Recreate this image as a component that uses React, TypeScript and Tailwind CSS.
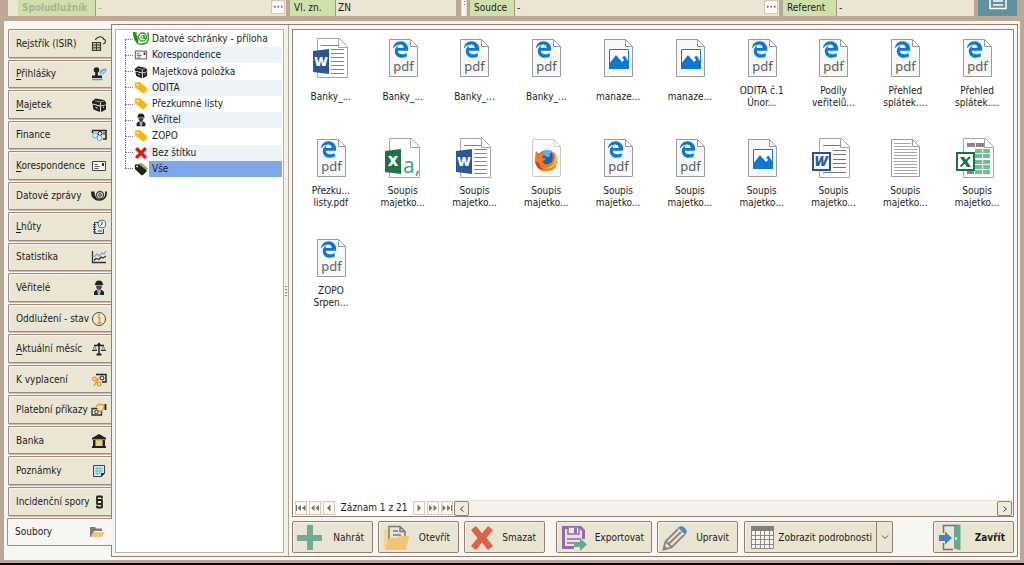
import React from "react";
import { FaEdgeLegacy } from "react-icons/fa";

type IconProps = { className?: string };

const Svg16 = ({ children, className = "h-4 w-4" }: { children: React.ReactNode; className?: string }) => (
  <svg viewBox="0 0 16 16" className={`shrink-0 ${className}`} fill="none" aria-hidden="true">
    {children}
  </svg>
);

const RegisterIcon = () => (
  <Svg16>
    <path d="M1.500 6.500h8v8h-8z" fill="#b9cb8c" stroke="#39422a" strokeWidth="1.200" />
    <path d="M1.500 9h8M1.500 11.800h8M5.500 6.500v8" stroke="#39422a" />
    <path d="M4.500 4q.5-2.500 3-2.500q1.500-1.300 3.500-.300q1.500.800 1.500 2q2 .5 2 2.300T12 8" stroke="#333" strokeWidth="1.200" />
  </Svg16>
);

const StampIcon = () => (
  <Svg16>
    <circle cx="5.500" cy="4" r="2.800" fill="#222" />
    <path d="M4.500 5h2l.5 4.500h4V12H1V9.500h3z" fill="#222" />
    <path d="M1 13.500h10.500" stroke="#4f9bc7" strokeWidth="1.500" />
    <path d="M8.500 8c-.5-3 2.500-6 7-5.500c.5 3-2.500 6.500-6 6z" fill="#6ab0de" />
    <path d="M9 8.500l5-4" stroke="#d9effa" />
  </Svg16>
);

const ChestIcon = ({ className }: IconProps) => (
  <Svg16 className={className}>
    <path d="M1 4.500L4.500 1.500L13 3l2 2.500v2L9.500 8.500L1 6.500z" fill="#222" />
    <path d="M1.500 7.500L9 9.500v5.500l-6.500-2.500zM10 9.500l5-1.500v4.500L10 15z" fill="#222" />
    <path d="M4 3.800l6 1.200l3-1" stroke="#aaa69b" strokeWidth=".9" />
    <path d="M9.500 5.500v3M4.500 10.500l2 .600M12 10.500l1-.400" stroke="#f0ece0" />
  </Svg16>
);

const FinanceIcon = () => (
  <Svg16>
    <path d="M1 3.500h14v8.500h-3M1.500 3.500V6" stroke="#222" strokeWidth="1.500" />
    <circle cx="9" cy="6.500" r="2" stroke="#222" />
    <circle cx="4" cy="8.500" r="2.500" fill="#d9edf8" stroke="#5aa8d6" />
    <circle cx="8.500" cy="11" r="2.500" fill="#d9edf8" stroke="#5aa8d6" />
    <path d="M13 5v3" stroke="#222" />
  </Svg16>
);

const LetterIcon = ({ className }: IconProps) => (
  <Svg16 className={className}>
    <path d="M1.500 3.500h13v9h-13z" stroke="#444" fill="#f7f6f0" />
    <path d="M3.500 6.500h3M3.500 8.500h5M3.500 10.500h4" stroke="#555" />
    <path d="M11 5h2v3h-2z" fill="#333" />
  </Svg16>
);

const HornIcon = () => (
  <Svg16>
    <path d="M0 3.500h3.500q0 4.500 3 7.500q-6.500 1.500-6.500-7.500z" fill="#222" />
    <path d="M16 3.500h-2q1 5-3 7.500q5 1 5-7.500z" fill="#222" />
    <circle cx="9" cy="7" r="3.500" stroke="#444" strokeWidth="1.300" />
    <circle cx="9" cy="7" r="1.400" stroke="#333" />
    <path d="M4 11q4 2 8.500 0" stroke="#222" strokeWidth="1.500" />
  </Svg16>
);

const DataBoxIcon = () => (
  <Svg16>
    <path d="M0 1h3.500l2 9l-1 3c-3-3-4.500-7-4.500-12z" fill="#23801f" />
    <path d="M2 1h2l1.500 9z" fill="#8cc63f" />
    <circle cx="9.500" cy="6" r="4" stroke="#2d9a2a" strokeWidth="1.300" />
    <circle cx="9.500" cy="6" r="1.500" stroke="#2d9a2a" />
    <path d="M11 4v3q1 1 2-.5M4 11.500q3 3 8 1t2.800-11" stroke="#2d9a2a" strokeWidth="1.500" />
  </Svg16>
);

const DeadlineIcon = () => (
  <Svg16>
    <path d="M8 3.500H3.500v11h9V10" stroke="#3b444b" fill="#dfe7ea" />
    <path d="M2 5.500h3M2 8h3M2 10.500h3M2 13h3" stroke="#3b444b" />
    <circle cx="11" cy="5" r="4" fill="#e8f3f8" stroke="#52788c" />
    <path d="M11 2.500V5l-1.500 1.500M7 12h4" stroke="#3b444b" />
  </Svg16>
);

const StatsIcon = () => (
  <Svg16>
    <path d="M1.500 2v11.500H15" stroke="#333" strokeWidth="1.300" />
    <path d="M3 8l3-3l2 2l3-3l2 1l2-3" stroke="#69add1" strokeWidth="1.300" />
    <path d="M3 11.500l2-2l3 1l2-2.500l2 1l3-2" stroke="#333" strokeWidth="1.300" />
  </Svg16>
);

const PersonIcon = ({ className }: IconProps) => (
  <Svg16 className={className}>
    <path d="M4.500 3q0-2.500 3.500-2.500t3.500 2.500l1 2h-9z" fill="#222" />
    <path d="M5 5.500h6q0 4-3 4t-3-4z" fill="#4a4a4a" />
    <path d="M3 15v-3q1-2 3.500-2.500h3Q12 10 13 12v3z" fill="#222" />
    <path d="M6 10h4L9 15H7z" fill="#86b9d7" />
  </Svg16>
);

const InfoIcon = () => (
  <Svg16>
    <circle cx="8" cy="8" r="6.500" stroke="#4e4636" fill="#f3e9c9" />
    <path d="M6.500 6.500H8.500V12M6.500 12h4" stroke="#d79a17" strokeWidth="1.500" />
    <circle cx="8" cy="4" r="1.100" fill="#d79a17" />
  </Svg16>
);

const ScalesIcon = () => (
  <Svg16>
    <path d="M8 3v10M3 4.500h3.500l1.500-2l1.500 2H13" stroke="#222" strokeWidth="1.500" />
    <path d="M3.500 5L2 9h3.500zM12.500 5l-2 4H14z" stroke="#666" strokeWidth=".8" />
    <path d="M1 9.500h5M10 9.500h5" stroke="#333" />
    <path d="M5.500 13.500h5" stroke="#222" strokeWidth="2" />
  </Svg16>
);

const PercentIcon = () => (
  <Svg16>
    <path d="M5 2.500h10v7.500h-4" stroke="#222" strokeWidth="1.400" />
    <circle cx="11" cy="6" r="2" stroke="#222" />
    <circle cx="3.500" cy="7" r="1.800" stroke="#dd9a25" strokeWidth="1.300" />
    <circle cx="8" cy="12" r="1.800" stroke="#dd9a25" strokeWidth="1.300" />
    <path d="M8.500 5L3 14" stroke="#dd9a25" strokeWidth="1.400" />
  </Svg16>
);

const PaymentIcon = () => (
  <Svg16>
    <path d="M1 6.500h9.500v6.500H1z" stroke="#333" strokeWidth="1.300" />
    <circle cx="5.500" cy="10" r="1.800" stroke="#333" />
    <path d="M5 5q2-3.500 5-2.500l3 .5v4l-3 2q-2 1-2-1" stroke="#dd9a25" fill="#f4e2b5" strokeWidth="1.400" />
    <path d="M14.500 2v6" stroke="#222" strokeWidth="1.800" />
  </Svg16>
);

const BankIcon = () => (
  <Svg16>
    <path d="M1 5l7-4l7 4v1.500H1zM1 13h14v2H1zM2 7h2.500v6H2zM11.500 7H14v6h-2.500z" fill="#222" />
    <path d="M5.500 6.500h5v6h-5z" fill="#e5b54a" />
    <path d="M6.500 9h3M6.500 11h3" stroke="#fff4d0" />
  </Svg16>
);

const NoteIcon = () => (
  <Svg16>
    <path d="M2.500 2.500h11v8l-3 3h-8z" fill="#cfe8f5" stroke="#444" />
    <path d="M4 5.500h8M4 8h8M4 10.500h5M6 4v8M9 4v7" stroke="#62aed5" strokeWidth=".8" />
    <path d="M10 14v-4h4z" fill="#333" />
  </Svg16>
);

const ParagraphIcon = () => (
  <Svg16>
    <path d="M11 4.500V3q0-.5-.5-.5h-4q-.5 0-.5.5v2.500q0 .5.500.5h4q.5 0 .5.500v3q0 .5-.5.500h-4q-.5 0-.5-.5v-3q0-.5.500-.5M10.500 10q.5 0 .5.500V13q0 .5-.5.500h-4Q6 13.500 6 13v-1.500" stroke="#222" strokeWidth="1.800" />
  </Svg16>
);

const FolderIcon = () => (
  <Svg16>
    <path d="M1 3h5l1 1.500h6V7H5l-3 6H1z" fill="#7c7c80" />
    <path d="M4.500 8H16l-3 5H1.500z" fill="#ecc67c" />
  </Svg16>
);

const TagIcon = ({ className }: IconProps) => (
  <Svg16 className={className}>
    <path d="M1 3q0-1.500 1.500-1.500H7l8 7q.7.700 0 1.500l-3.500 4q-.7.700-1.500 0L1 7z" fill="#fdb515" />
    <circle cx="4" cy="4.500" r="1" fill="#fff" />
  </Svg16>
);

const AllTagsIcon = ({ className }: IconProps) => (
  <Svg16 className={className}>
    <path d="M4 2l5-1l6.500 6l-1 4l-6 2z" fill="#8fa653" />
    <path d="M1 4q0-1.500 1.500-1.500L6 3l8 6v2l-4 4H8.500L1 8z" fill="#1f241a" />
    <circle cx="3.500" cy="5" r="1" fill="#fff" />
  </Svg16>
);

const CrossIcon = ({ className }: IconProps) => (
  <Svg16 className={className}>
    <path d="M2.500 2.500l11 11M13.500 2.500l-11 11" stroke="#f20d0d" strokeWidth="3.800" />
  </Svg16>
);

/* ---------- file icons ---------- */

const Page = ({ fill = "#f8f8f8" }: { fill?: string }) => (
  <>
    <path d="M10.500 5.500h21l7 7v30h-28z" fill={fill} stroke="#9b9b9b" />
    <path d="M31.500 5.500v7h7z" fill="#fff" stroke="#9b9b9b" />
  </>
);

const WidePage = () => (
  <>
    <path d="M10.500 4.500h22l8 8v31h-30z" fill="#fff" stroke="#a5a5a5" />
    <path d="M31.500 4.500v9h9" stroke="#a5a5a5" />
  </>
);

type FileKind = "word" | "pdf" | "image" | "csv" | "firefox" | "rtf" | "text" | "excel";

const FileIcon = ({ kind }: { kind: FileKind }) => (
  <svg viewBox="0 0 48 48" className="h-12 w-12 shrink-0" fill="none" aria-hidden="true">
    {kind === "pdf" && (
      <>
        <Page />
        <FaEdgeLegacy x="13" y="7" size={17} color="#0a78d7" />
        <text x="24.500" y="37" textAnchor="middle" fontFamily="Noto Sans, sans-serif" fontSize="13" fill="#5c5c5c">pdf</text>
      </>
    )}
    {kind === "image" && (
      <>
        <Page />
        <path d="M15.500 15.500h19v19h-19z" fill="#fff" stroke="#0a78d7" />
        <path d="M15 30l7-9l6 7l2-2l-2-3l3-1l4 7v6H15z" fill="#0a78d7" />
      </>
    )}
    {kind === "word" && (
      <>
        <WidePage />
        <path d="M14 11.500h18M24 15.500h13M24 19.500h13M24 23.500h13M24 27.500h13M24 31.500h13M24 35.500h13M24 39.500h13" stroke="#858585" />
        <path d="M6 17l16-2v25l-16-2z" fill="#2b579a" />
        <text x="14" y="32" textAnchor="middle" fontFamily="Open Sans, sans-serif" fontSize="13" fontWeight="800" fill="#fff">W</text>
      </>
    )}
    {kind === "csv" && (
      <>
        <WidePage />
        <text x="24" y="39" fontFamily="Noto Sans, sans-serif" fontSize="21" fill="#4fa077">a,</text>
        <path d="M6 17l16-2v25l-16-2z" fill="#207245" />
        <text x="14" y="32" textAnchor="middle" fontFamily="Open Sans, sans-serif" fontSize="14" fontWeight="800" fill="#fff">X</text>
      </>
    )}
    {kind === "rtf" && (
      <>
        <WidePage />
        <path d="M14 11.500h18M24 16.500h13M24 20.500h13M24 25.500h13M24 29.500h13M24 33.500h13M14 38.500h23" stroke="#777" />
        <path d="M4 19h17v17H4z" fill="#fff" stroke="#2a4f9c" strokeWidth="2" />
        <text x="12" y="32" textAnchor="middle" fontFamily="Open Sans, sans-serif" fontSize="14" fontStyle="italic" fontWeight="800" fill="#2a5bb0">W</text>
      </>
    )}
    {kind === "text" && (
      <>
        <Page fill="#fff" />
        <path d="M13 9.500h17M13 12.500h17M13 15.500h23M13 18.500h23M13 21.500h23M13 24.500h23M13 27.500h23M13 30.500h23M13 33.500h23M13 36.500h23M13 39.500h23" stroke="#a6a6a6" />
      </>
    )}
    {kind === "excel" && (
      <>
        <WidePage />
        <path d="M14 9h8v4h-8zM23 9h8v4h-8zM14 36h7v4h-7z" fill="#8c8585" />
        <path d="M22 15h7v4h-7zM30 15h7v4h-7zM22 20h7v4h-7zM30 20h7v4h-7zM22 26h7v4h-7zM30 26h7v4h-7zM22 31h7v4h-7zM30 31h7v4h-7zM22 36h7v4h-7zM30 36h7v4h-7z" fill="#6fbf92" />
        <path d="M4 19h17v17H4z" fill="#fff" stroke="#1d7044" strokeWidth="2" />
        <path d="M7 23h4l7 10h-4z" fill="#1d7044" />
        <path d="M17 23L7.500 32.500" stroke="#1d7044" strokeWidth="2" />
      </>
    )}
    {kind === "firefox" && (
      <>
        <path d="M12 5.500h20l6.500 7V41q0 1.500-1.500 1.500H12q-1.500 0-1.500-1.500V7q0-1.500 1.500-1.500z" fill="#fbfbfb" stroke="#ccc" />
        <path d="M32 5.500v7h6.500" stroke="#ccc" />
        <circle cx="25" cy="26" r="10" fill="#1d64ad" />
        <path d="M20 18q5-4 10 0q-3 1-2 4q-4 3-8-4z" fill="#58b8ea" />
        <path d="M14 17q1 2 3 2q3-1 6 1l-3 3q1 2 4 1q-1 3-4 3q2 4 6 3q5-1 5-6q0-4-2-7q6 3 6 9.500q0 10.500-10.500 10.500T13 26q0-5 1-9z" fill="#ef7b1a" />
        <path d="M33 19q4 6 0 12q-4 5-11 3q8 0 10-6q2-5 1-9z" fill="#fbc52d" />
        <path d="M13 27q1 9 10 10q-5-3-6-8z" fill="#d9411e" />
      </>
    )}
  </svg>
);

/* ---------- toolbar icons ---------- */

const Svg28 = ({ children }: { children: React.ReactNode }) => (
  <svg viewBox="0 0 28 28" className="h-7 w-7 shrink-0" fill="none" aria-hidden="true">
    {children}
  </svg>
);

const PlusIcon = () => (
  <Svg28>
    <path d="M11 1h6v10h9v6h-9v9h-6v-9H1v-6h10z" fill="#72ac94" />
  </Svg28>
);

const OpenIcon = () => (
  <Svg28>
    <path d="M2 5h5v19H2z" fill="#f6d58c" />
    <path d="M7 18V2.500h11l5 5V14M18 2.500v5h5M11 7h5M11 11h8" stroke="#777b80" strokeWidth="1.500" />
    <path d="M7 14h8l3-2h9l-3 14H3z" fill="#efc772" />
  </Svg28>
);

const DeleteIcon = () => (
  <Svg28>
    <path d="M3 6l5-4l6 7.500l6-7.500l5 4l-6.500 8l6.500 8l-5 4l-6-7.500l-6 7.500l-5-4l6.500-8z" fill="#de6245" />
  </Svg28>
);

const ExportIcon = () => (
  <Svg28>
    <path d="M3.500 3.500h17l3 3V15M3.500 2v21.500H14" stroke="#9468ac" strokeWidth="3" />
    <path d="M8 3h11v7H8z" fill="#f3ecf5" stroke="#9468ac" strokeWidth="1.500" />
    <path d="M14 4h3v5h-3z" fill="#9468ac" />
    <path d="M7 15h14M7 19h8" stroke="#9468ac" strokeWidth="1.500" />
    <path d="M14 18h6v-4l7 6.500l-7 6.500v-4h-6z" fill="#67a98e" />
  </Svg28>
);

const PencilIcon = () => (
  <Svg28>
    <path d="M2.500 25.500l2-8L18 4l6 6L10.500 23.500zM5 17.500l5.500 5.500M7.500 20L21 7" stroke="#858585" strokeWidth="1.800" />
    <path d="M2 26l1-5l4 4z" fill="#858585" />
    <path d="M18 3l2-1q5 1 6 6l-2 2z" fill="#4f86c6" />
    <path d="M17 4.500l6.500 6.500" stroke="#fff" />
  </Svg28>
);

const GridIcon = () => (
  <Svg28>
    <path d="M3.500 3.500h22v21h-22z" fill="#f7f4ea" stroke="#8a8a8a" />
    <path d="M3 2h23v5H3z" fill="#808080" />
    <path d="M3 11.500h23M3 15.500h23M3 20.500h23M7.500 7v18M12.500 7v18M16.500 7v18M21.500 7v18" stroke="#8a8a8a" />
  </Svg28>
);

const DoorIcon = () => (
  <Svg28>
    <path d="M6.500 9V1.500H22M6.500 19v6.500H16" stroke="#68747a" strokeWidth="1.500" />
    <path d="M17 2.500l6.500-2v26L17 24.500z" fill="#62aa91" />
    <path d="M19 13v3" stroke="#e7f4ee" strokeWidth="1.500" />
    <path d="M2 11h6V7.500l7 6.500l-7 6.500V17H2z" fill="#4681c4" />
  </Svg28>
);

/* ---------- data ---------- */

type TabItem = { label: string; icon: React.ReactNode; hotkey?: boolean; active?: boolean };

const tabs: TabItem[] = [
  { label: "Rejstřík (ISIR)", icon: <RegisterIcon /> },
  { label: "Přihlášky", icon: <StampIcon />, hotkey: true },
  { label: "Majetek", icon: <ChestIcon />, hotkey: true },
  { label: "Finance", icon: <FinanceIcon /> },
  { label: "Korespondence", icon: <LetterIcon />, hotkey: true },
  { label: "Datové zprávy", icon: <HornIcon /> },
  { label: "Lhůty", icon: <DeadlineIcon />, hotkey: true },
  { label: "Statistika", icon: <StatsIcon /> },
  { label: "Věřitelé", icon: <PersonIcon /> },
  { label: "Oddlužení - stav", icon: <InfoIcon /> },
  { label: "Aktuální měsíc", icon: <ScalesIcon />, hotkey: true },
  { label: "K vyplacení", icon: <PercentIcon /> },
  { label: "Platební příkazy", icon: <PaymentIcon /> },
  { label: "Banka", icon: <BankIcon /> },
  { label: "Poznámky", icon: <NoteIcon /> },
  { label: "Incidenční spory", icon: <ParagraphIcon /> },
  { label: "Soubory", icon: <FolderIcon />, active: true },
];

const labels = [
  { label: "Datové schránky - příloha", icon: <DataBoxIcon /> },
  { label: "Korespondence", icon: <LetterIcon className="h-3.5 w-3.5" /> },
  { label: "Majetková položka", icon: <ChestIcon className="h-3.5 w-3.5" /> },
  { label: "ODITA", icon: <TagIcon className="h-3.5 w-3.5" /> },
  { label: "Přezkumné listy", icon: <TagIcon className="h-3.5 w-3.5" /> },
  { label: "Věřitel", icon: <PersonIcon className="h-3.5 w-3.5" /> },
  { label: "ZOPO", icon: <TagIcon className="h-3.5 w-3.5" /> },
  { label: "Bez štítku", icon: <CrossIcon className="h-3.5 w-3.5" /> },
  { label: "Vše", icon: <AllTagsIcon className="h-3.5 w-3.5" /> },
];

const files: { kind: FileKind; lines: string[] }[] = [
  { kind: "word", lines: ["Banky_..."] },
  { kind: "pdf", lines: ["Banky_..."] },
  { kind: "pdf", lines: ["Banky_..."] },
  { kind: "pdf", lines: ["Banky_..."] },
  { kind: "image", lines: ["manaze..."] },
  { kind: "image", lines: ["manaze..."] },
  { kind: "pdf", lines: ["ODITA č.1", "Únor..."] },
  { kind: "pdf", lines: ["Podíly", "veřitelů..."] },
  { kind: "pdf", lines: ["Přehled", "splátek...."] },
  { kind: "pdf", lines: ["Přehled", "splátek...."] },
  { kind: "pdf", lines: ["Přezku...", "listy.pdf"] },
  { kind: "csv", lines: ["Soupis", "majetko..."] },
  { kind: "word", lines: ["Soupis", "majetko..."] },
  { kind: "firefox", lines: ["Soupis", "majetko..."] },
  { kind: "pdf", lines: ["Soupis", "majetko..."] },
  { kind: "pdf", lines: ["Soupis", "majetko..."] },
  { kind: "image", lines: ["Soupis", "majetko..."] },
  { kind: "rtf", lines: ["Soupis", "majetko..."] },
  { kind: "text", lines: ["Soupis", "majetko..."] },
  { kind: "excel", lines: ["Soupis", "majetko..."] },
  { kind: "pdf", lines: ["ZOPO", "Srpen..."] },
];

/* ---------- parts ---------- */

const labelClass = "flex items-center bg-[#d0e0ad] px-1";
const fieldClass = "min-w-0 flex-1 border-l border-[#a89684] bg-[#ebe5d4] px-0.5 outline-none";

const MoreButton = ({ label }: { label: string }) => (
  <button type="button" aria-label={label} className="mb-0.5 flex w-3.5 shrink-0 items-center justify-center border border-[#d6c8b8] bg-[#faf8f3] text-[#555]">
    <svg viewBox="0 0 10 4" className="h-1 w-2.5" fill="currentColor">
      <path d="M1 1h1.500v1.500H1zM4.500 1H6v1.500H4.500zM8 1h1.500v1.500H8z" />
    </svg>
  </button>
);

const CaseHeader = () => (
  <header className="flex h-4 shrink-0 pl-2 pr-[7px]">
    <div className="flex w-[278px] bg-[#ebe5d4] pl-2.5 pr-px">
      <label htmlFor="codebtor" className={`${labelClass} w-[77px] font-bold text-[#a9b48d]`}>Spoludlužník</label>
      <input id="codebtor" defaultValue="-" disabled className={`${fieldClass} text-[#a9a294]`} />
      <MoreButton label="Vybrat spoludlužníka" />
    </div>
    <div className="ml-1 flex w-[166px]">
      <label htmlFor="mark" className={`${labelClass} w-[45px]`}>Vl. zn.</label>
      <input id="mark" defaultValue="ZN" className={fieldClass} />
    </div>
    <div className="ml-[5px] flex w-1.5 flex-col items-center gap-0.5 border-x border-[#e6dccd] bg-[#f8f5ef] pt-px">
      <span className="h-px w-px bg-[#777]" />
      <span className="h-px w-px bg-[#777]" />
    </div>
    <div className="ml-[3px] flex flex-1">
      <label htmlFor="judge" className={`${labelClass} w-11`}>Soudce</label>
      <input id="judge" defaultValue="-" className={fieldClass} />
      <div className="flex bg-[#ebe5d4] pr-px">
        <MoreButton label="Vybrat soudce" />
      </div>
    </div>
    <div className="ml-1 flex w-[191px]">
      <label htmlFor="clerk" className={`${labelClass} w-[53px]`}>Referent</label>
      <input id="clerk" defaultValue="-" className={fieldClass} />
    </div>
    <button type="button" aria-label="Detail spisu" className="ml-1 flex w-[39px] justify-center bg-[#5f929d]">
      <svg viewBox="0 0 20 16" className="h-4 w-5" fill="none">
        <path d="M2 0v8.500h16V0" stroke="#fff" strokeWidth="1.500" />
        <path d="M5 1h10M5 5h10" stroke="#fff" strokeWidth="1.500" />
      </svg>
    </button>
  </header>
);

const SideTabs = () => (
  <nav className="mb-[11px] mt-[5px] flex w-[103px] shrink-0 flex-col gap-0.5">
    {tabs.map((tab) => (
      <button
        key={tab.label}
        type="button"
        className={
          tab.active
            ? "relative z-10 -ml-px flex w-[105px] flex-1 items-center justify-between rounded-l-xs border border-r-0 border-[#a08a7c] bg-[#f8f6f3] pl-[7px] pr-[7px] pt-px"
            : "flex flex-1 items-center justify-between rounded-l-xs border border-r-0 border-[#a08a7c] bg-[#ebe5d4] pl-[7px] pr-1 pt-px shadow-[inset_1px_1px_0_#f8f4ea,0_1px_0_#cbbcaf]"
        }
      >
        <span className="whitespace-nowrap">
          {tab.hotkey ? (
            <>
              <span className="underline underline-offset-2">{tab.label[0]}</span>
              {tab.label.slice(1)}
            </>
          ) : (
            tab.label
          )}
        </span>
        {tab.icon}
      </button>
    ))}
  </nav>
);

const LabelTree = () => (
  <aside className="w-[169px] shrink-0 border border-[#bfb2a4] bg-white pt-px">
    <ul className="grid h-[146px] auto-rows-fr">
      {labels.map((item, i) => {
        const last = i === labels.length - 1;
        return (
          <li key={item.label} className="flex pr-px">
            <span className="flex w-[17px] shrink-0 flex-col pl-[9px]">
              <span className={i === 0 ? "flex-1" : "flex-1 border-l border-dotted border-[#777]"} />
              <span className={last ? "flex-1 border-t border-dotted border-[#777]" : "flex-1 border-l border-t border-dotted border-[#777]"} />
            </span>
            <span className="flex w-4 shrink-0 items-center justify-center">{item.icon}</span>
            <button
              type="button"
              className={`flex min-w-0 flex-1 items-center whitespace-nowrap pl-[3px] text-left ${last ? "bg-[#7fa7ec]" : i % 2 ? "bg-[#edf4f8]" : "bg-white"}`}
            >
              {item.label}
            </button>
          </li>
        );
      })}
    </ul>
  </aside>
);

const NavButton = ({ label, d }: { label: string; d: string }) => (
  <button type="button" aria-label={label} className="flex h-3.5 w-3 items-center justify-center border border-[#d5c3b5] bg-[#fbf9f6]">
    <svg viewBox="0 0 10 10" className="h-2.5 w-2.5 shrink-0" fill="#766f6a">
      <path d={d} />
    </svg>
  </button>
);

const RecordBar = () => (
  <div className="flex h-4 shrink-0 items-center">
    <div className="flex gap-0.5 pl-0.5">
      <NavButton label="První" d="M0 2h1v6H0zM5 2v6L1.500 5zM9.500 2v6L6 5z" />
      <NavButton label="O stránku zpět" d="M4.500 2v6L1 5zM9 2v6L5.500 5z" />
      <NavButton label="Předchozí" d="M6.500 1.500v7L3 5z" />
    </div>
    <span className="w-[78px] whitespace-nowrap text-center">Záznam 1 z 21</span>
    <div className="flex gap-0.5">
      <NavButton label="Další" d="M3.500 1.500v7L7 5z" />
      <NavButton label="O stránku vpřed" d="M1 2v6l3.500-3zM5.500 2v6L9 5z" />
      <NavButton label="Poslední" d="M.5 2v6L4 5zM5 2v6l3.500-3zM9 2h1v6H9z" />
    </div>
    <div className="ml-px flex h-4 flex-1 justify-between border-t border-[#ebe5dc] bg-[#f5f1ea]">
      <button type="button" aria-label="Posunout vlevo" className="flex w-[15px] items-center justify-center rounded-xs border border-[#8f8078] bg-[#f0ebdf]">
        <svg viewBox="0 0 8 8" className="h-2 w-2" fill="none" stroke="#444"><path d="M5.500 1.500L2.500 4l3 2.500" /></svg>
      </button>
      <button type="button" aria-label="Posunout vpravo" className="mr-px flex w-[15px] items-center justify-center rounded-xs border border-[#8f8078] bg-[#f0ebdf]">
        <svg viewBox="0 0 8 8" className="h-2 w-2" fill="none" stroke="#444"><path d="M2.500 1.500L5.500 4l-3 2.500" /></svg>
      </button>
    </div>
  </div>
);

const toolClass = "flex h-8 items-center justify-between rounded-xs border border-[#8f8073] bg-[#eae4d2] pl-[3px] pt-0.5 whitespace-nowrap shadow-[inset_1px_1px_0_#f7f3e8]";

const Toolbar = () => (
  <div className="mt-1 flex shrink-0 gap-[5px]">
    <button type="button" className={`${toolClass} w-[81px] pr-2`}><PlusIcon />Nahrát</button>
    <button type="button" className={`${toolClass} w-[81px] pr-2`}><OpenIcon />Otevřít</button>
    <button type="button" className={`${toolClass} w-[81px] pr-2`}><DeleteIcon />Smazat</button>
    <button type="button" className={`${toolClass} ml-1.5 w-24 pr-[7px]`}><ExportIcon />Exportovat</button>
    <button type="button" className={`${toolClass} w-[81px] pr-2`}><PencilIcon />Upravit</button>
    <div className="ml-px flex">
      <button type="button" className={`${toolClass} w-[133px] rounded-r-none pr-1`}><GridIcon />Zobrazit podrobnosti</button>
      <button type="button" aria-label="Další zobrazení" className="flex w-4 items-center justify-center rounded-r-xs border border-l-0 border-[#8f8073] bg-[#eae4d2]">
        <svg viewBox="0 0 8 8" className="h-2 w-2" fill="none" stroke="#555"><path d="M1 2.500l3 3l3-3" /></svg>
      </button>
    </div>
    <button type="button" className={`${toolClass} ml-auto w-[81px] pr-2 font-bold`}><DoorIcon />Zavřít</button>
  </div>
);

const FilePane = () => (
  <section className="flex min-w-0 flex-1 flex-col">
    <div className="flex flex-1 flex-col border border-[#8f8073] bg-white">
      <ul className="grid flex-1 auto-rows-[100px] grid-cols-10 content-start pl-0.5 pt-1">
        {files.map((file, i) => (
          <li key={i} className="flex flex-col items-center gap-[3px]">
            <FileIcon kind={file.kind} />
            <span className="flex h-6 flex-col items-center justify-center leading-3">
              {file.lines.map((line) => (
                <span key={line} className="whitespace-nowrap">{line}</span>
              ))}
            </span>
          </li>
        ))}
      </ul>
      <RecordBar />
    </div>
    <Toolbar />
  </section>
);

const App = () => (
  <div className="flex min-h-screen flex-col border-b-2 border-black bg-[#bca696] font-['DejaVu_Sans_Condensed','DejaVu_Sans',sans-serif] text-[10px] leading-3 text-[#1c1c1c]">
    <CaseHeader />
    <main className="mx-1 mb-[3px] mt-[5px] flex flex-1 bg-[#f8f6f3] pb-[3px] pl-1 pr-0.5 pt-[3px]">
      <SideTabs />
      <div className="flex min-w-0 flex-1 border border-[#8f8073] pb-[3px] pl-[3px] pr-[3px] pt-1">
        <LabelTree />
        <div className="-mb-[3px] -mt-1 mr-[3px] flex w-[5px] shrink-0 flex-col items-center justify-center gap-0.5 border-r border-[#b5a699] bg-[#f5f1e8]">
          <span className="h-px w-0.5 bg-[#8f8073]" />
          <span className="h-px w-0.5 bg-[#8f8073]" />
          <span className="h-px w-0.5 bg-[#8f8073]" />
          <span className="h-px w-0.5 bg-[#8f8073]" />
        </div>
        <FilePane />
      </div>
    </main>
  </div>
);

export default App;
